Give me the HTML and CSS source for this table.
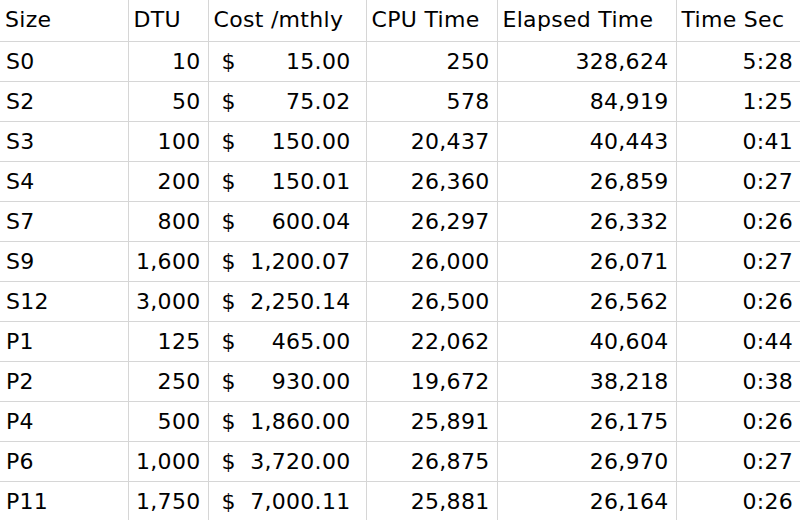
FILE: index.html
```html
<!DOCTYPE html>
<html>
<head>
<meta charset="utf-8">
<link rel="stylesheet" href="styles.css">
</head>
<body>
<table class="sheet">
  <colgroup>
    <col class="c-size"><col class="c-dtu"><col class="c-cost"><col class="c-cpu"><col class="c-elapsed"><col class="c-sec">
  </colgroup>
  <thead>
    <tr><th>Size</th><th>DTU</th><th>Cost /mthly</th><th>CPU Time</th><th>Elapsed Time</th><th>Time Sec</th></tr>
  </thead>
  <tbody>
    <tr><td>S0</td><td class="num">10</td><td class="money"><span>$</span><span>15.00</span></td><td class="num">250</td><td class="num">328,624</td><td class="num">5:28</td></tr>
    <tr><td>S2</td><td class="num">50</td><td class="money"><span>$</span><span>75.02</span></td><td class="num">578</td><td class="num">84,919</td><td class="num">1:25</td></tr>
    <tr><td>S3</td><td class="num">100</td><td class="money"><span>$</span><span>150.00</span></td><td class="num">20,437</td><td class="num">40,443</td><td class="num">0:41</td></tr>
    <tr><td>S4</td><td class="num">200</td><td class="money"><span>$</span><span>150.01</span></td><td class="num">26,360</td><td class="num">26,859</td><td class="num">0:27</td></tr>
    <tr><td>S7</td><td class="num">800</td><td class="money"><span>$</span><span>600.04</span></td><td class="num">26,297</td><td class="num">26,332</td><td class="num">0:26</td></tr>
    <tr><td>S9</td><td class="num">1,600</td><td class="money"><span>$</span><span>1,200.07</span></td><td class="num">26,000</td><td class="num">26,071</td><td class="num">0:27</td></tr>
    <tr><td>S12</td><td class="num">3,000</td><td class="money"><span>$</span><span>2,250.14</span></td><td class="num">26,500</td><td class="num">26,562</td><td class="num">0:26</td></tr>
    <tr><td>P1</td><td class="num">125</td><td class="money"><span>$</span><span>465.00</span></td><td class="num">22,062</td><td class="num">40,604</td><td class="num">0:44</td></tr>
    <tr><td>P2</td><td class="num">250</td><td class="money"><span>$</span><span>930.00</span></td><td class="num">19,672</td><td class="num">38,218</td><td class="num">0:38</td></tr>
    <tr><td>P4</td><td class="num">500</td><td class="money"><span>$</span><span>1,860.00</span></td><td class="num">25,891</td><td class="num">26,175</td><td class="num">0:26</td></tr>
    <tr><td>P6</td><td class="num">1,000</td><td class="money"><span>$</span><span>3,720.00</span></td><td class="num">26,875</td><td class="num">26,970</td><td class="num">0:27</td></tr>
    <tr><td>P11</td><td class="num">1,750</td><td class="money"><span>$</span><span>7,000.11</span></td><td class="num">25,881</td><td class="num">26,164</td><td class="num">0:26</td></tr>
  </tbody>
</table>
</body>
</html>
```

FILE: styles.css
```css
html, body {
  margin: 0;
  padding: 0;
  background: #ffffff;
}

.sheet {
  border-collapse: collapse;
  table-layout: fixed;
  width: 800px;
  font-family: "DejaVu Sans", "Liberation Sans", sans-serif;
  font-size: 22px;
  letter-spacing: 0.3px;
  color: #000000;
}

.c-size { width: 128px; }
.c-dtu { width: 80px; }
.c-cost { width: 158px; }
.c-cpu { width: 131px; }
.c-elapsed { width: 179px; }
.c-sec { width: 124px; }

.sheet th,
.sheet td {
  height: 39px;
  padding: 0 6px 0 5px;
  border-right: 1px solid #d6d6d6;
  border-bottom: 1px solid #d6d6d6;
  white-space: nowrap;
  overflow: hidden;
  vertical-align: middle;
  line-height: 39px;
}

.sheet th {
  font-weight: normal;
  text-align: left;
  line-height: 35px;
  padding-bottom: 2px;
}

.sheet td {
  line-height: 37px;
}

.sheet td:first-child {
  padding-left: 6px;
}

.sheet tr > :last-child {
  border-right: none;
}

.sheet td.num {
  text-align: right;
  padding-right: 7px;
}

.sheet td.money {
  padding: 0;
}

.money span:first-child {
  float: left;
  padding-left: 13px;
}

.money span:last-child {
  float: right;
  padding-right: 15px;
}
```
